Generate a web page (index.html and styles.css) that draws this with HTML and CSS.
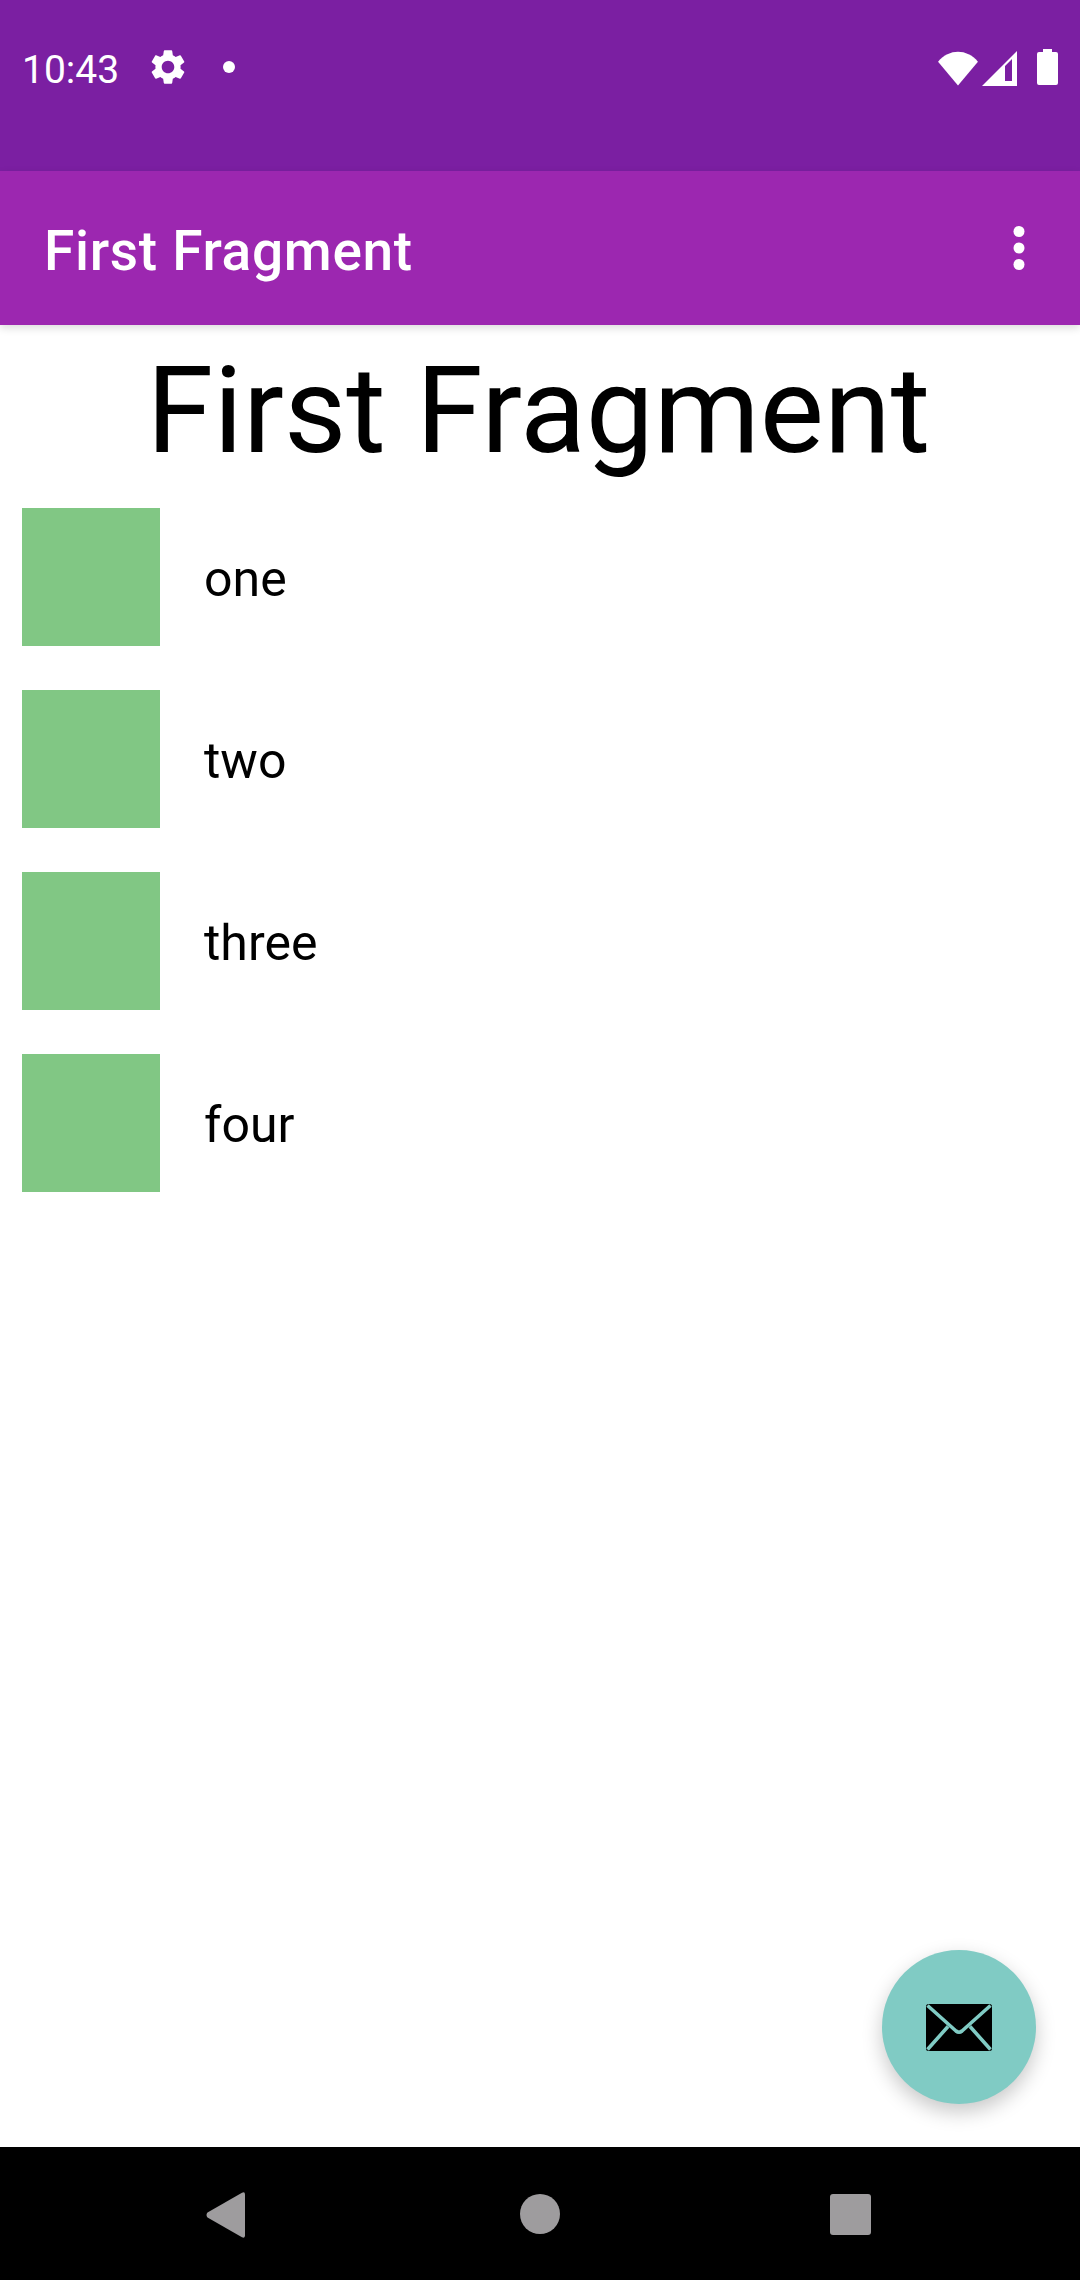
FILE: index.html
```html
<!DOCTYPE html>
<html lang="en">
<head>
<meta charset="utf-8">
<title>First Fragment</title>
<link rel="stylesheet" href="styles.css">
</head>
<body>
<div class="screen">
  <header class="status-bar">
    <div class="status-left">
      <span class="clock">10:43</span>
      <svg class="gear" viewBox="0 0 24 24"><path fill="#fff" d="M19.14 12.94c.04-.3.06-.61.06-.94 0-.32-.02-.64-.07-.94l2.03-1.58a.49.49 0 0 0 .12-.61l-1.92-3.32a.488.488 0 0 0-.59-.22l-2.39.96c-.5-.38-1.03-.7-1.62-.94l-.36-2.54a.484.484 0 0 0-.48-.41h-3.84c-.24 0-.43.17-.47.41l-.36 2.54c-.59.24-1.13.57-1.62.94l-2.39-.96c-.22-.08-.47 0-.59.22L2.74 8.87c-.12.21-.08.47.12.61l2.03 1.58c-.05.3-.09.63-.09.94s.02.64.07.94l-2.03 1.58a.49.49 0 0 0-.12.61l1.92 3.32c.12.22.37.29.59.22l2.39-.96c.5.38 1.03.7 1.62.94l.36 2.54c.05.24.24.41.48.41h3.84c.24 0 .44-.17.47-.41l.36-2.54c.59-.24 1.13-.56 1.62-.94l2.39.96c.22.08.47 0 .59-.22l1.92-3.32c.12-.22.07-.47-.12-.61l-2.01-1.58zM12 15.6c-1.98 0-3.6-1.62-3.6-3.6s1.62-3.6 3.6-3.6 3.6 1.62 3.6 3.6-1.62 3.6-3.6 3.6z"/></svg>
      <span class="dot"></span>
    </div>
    <div class="status-right">
      <svg class="wifi" viewBox="0 0 42 36"><path fill="#fff" d="M0.5 11 C12 -2.5 30 -2.5 41.5 11 L21 35.5 Z"/></svg>
      <svg class="signal" viewBox="0 0 35 35"><path fill="#fff" fill-rule="evenodd" d="M35 0V35H0ZM30 8 23 15V30H30Z"/></svg>
      <svg class="battery" viewBox="0 0 21 36"><path fill="#fff" d="M6 0H15V3H19Q21 3 21 5V34Q21 36 19 36H2Q0 36 0 34V5Q0 3 2 3H6Z"/></svg>
    </div>
  </header>
  <div class="app-bar">
    <h1 class="app-title">First Fragment</h1>
    <svg class="overflow" viewBox="0 0 12 44"><circle cx="6" cy="5.5" r="5.5" fill="#fff"/><circle cx="6" cy="22" r="5.5" fill="#fff"/><circle cx="6" cy="38.5" r="5.5" fill="#fff"/></svg>
  </div>
  <main class="content">
    <h2 class="heading">First Fragment</h2>
    <ul class="list">
      <li class="row"><span class="swatch"></span><span class="label">one</span></li>
      <li class="row"><span class="swatch"></span><span class="label">two</span></li>
      <li class="row"><span class="swatch"></span><span class="label">three</span></li>
      <li class="row"><span class="swatch"></span><span class="label">four</span></li>
    </ul>
    <button class="fab" aria-label="Email">
      <svg class="mail" viewBox="0 0 66 47">
        <rect width="66" height="47" rx="2.5" fill="#000"/>
        <path d="M1.5 1.5 30 27Q33 29.5 36 27L64.5 1.5M1.5 45.5 22 22.5M64.5 45.5 44 22.5" fill="none" stroke="#80cbc4" stroke-width="3.6"/>
      </svg>
    </button>
  </main>
  <nav class="nav-bar">
    <svg class="nav-back" viewBox="0 0 40 46"><path fill="#9e9c9e" d="M36 .8Q39 -.6 39 2.5V43.5Q39 46.6 36 45.2L1.5 25.5Q-.5 23 1.5 20.5Z"/></svg>
    <span class="nav-home"></span>
    <span class="nav-recent"></span>
  </nav>
</div>
</body>
</html>
```
FILE: styles.css
```css
* { box-sizing: border-box; }
html, body { margin: 0; padding: 0; }
body { font-family: Roboto, "Noto Sans", sans-serif; background: #fff; }
.screen { width: 1080px; height: 2280px; display: flex; flex-direction: column; overflow: hidden; }

.status-bar {
  height: 171px; flex: none; background: #7b1fa2; color: #fff;
  display: flex; justify-content: space-between; align-items: flex-start;
  padding: 47px 22px 0 22px;
}
.status-left { display: flex; align-items: center; height: 40px; }
.clock { font-size: 39px; line-height: 46px; height: 40px; width: 119px; }
.gear { width: 42px; height: 42px; margin-left: 6px; }
.dot { width: 12px; height: 12px; border-radius: 50%; background: #fff; margin-left: 34px; }
.status-right { display: flex; align-items: flex-start; margin-top: 4px; }
.wifi { width: 42px; height: 35px; display: block; }
.signal { width: 35px; height: 35px; display: block; margin-left: 3px; }
.battery { width: 21px; height: 36px; display: block; margin-left: 20px; margin-top: -2px; }

.app-bar {
  height: 154px; flex: none; background: #9c27b0; color: #fff;
  display: flex; align-items: center; justify-content: space-between;
  padding: 0 55px 0 44px; position: relative; z-index: 1;
  box-shadow: 0 3px 8px rgba(0, 0, 0, .14);
}
.app-title { margin: 0; font-size: 55px; font-weight: 500; line-height: 64px; letter-spacing: .0125em; padding-top: 6px; }
.overflow { width: 12px; height: 44px; display: block; }

.content { flex: 1; position: relative; }
.heading { margin: 0; text-align: center; font-weight: 400; font-size: 121px; line-height: 142px; height: 183px; padding: 15px 3px 0 0; color: #000; }
.list { list-style: none; margin: 0; padding: 0 0 0 22px; display: flex; flex-direction: column; gap: 44px; }
.row { display: flex; align-items: center; gap: 44px; height: 138px; }
.swatch { width: 138px; height: 138px; background: #81c784; flex: none; }
.label { font-size: 50px; line-height: 58px; padding-top: 4px; color: #000; }

.fab {
  position: absolute; right: 44px; bottom: 43px; width: 154px; height: 154px;
  border: 0; padding: 0; border-radius: 50%; background: #80cbc4;
  display: flex; align-items: center; justify-content: center;
  box-shadow: 0 8px 20px rgba(0, 0, 0, .22);
}
.mail { width: 66px; height: 47px; display: block; }

.nav-bar { height: 133px; flex: none; background: #000; position: relative; }
.nav-back { position: absolute; left: 206px; top: 45px; width: 40px; height: 46px; }
.nav-home { position: absolute; left: 520px; top: 47px; width: 40px; height: 40px; border-radius: 50%; background: #9e9c9e; }
.nav-recent { position: absolute; left: 830px; top: 47px; width: 41px; height: 41px; border-radius: 3px; background: #9e9c9e; }
```
